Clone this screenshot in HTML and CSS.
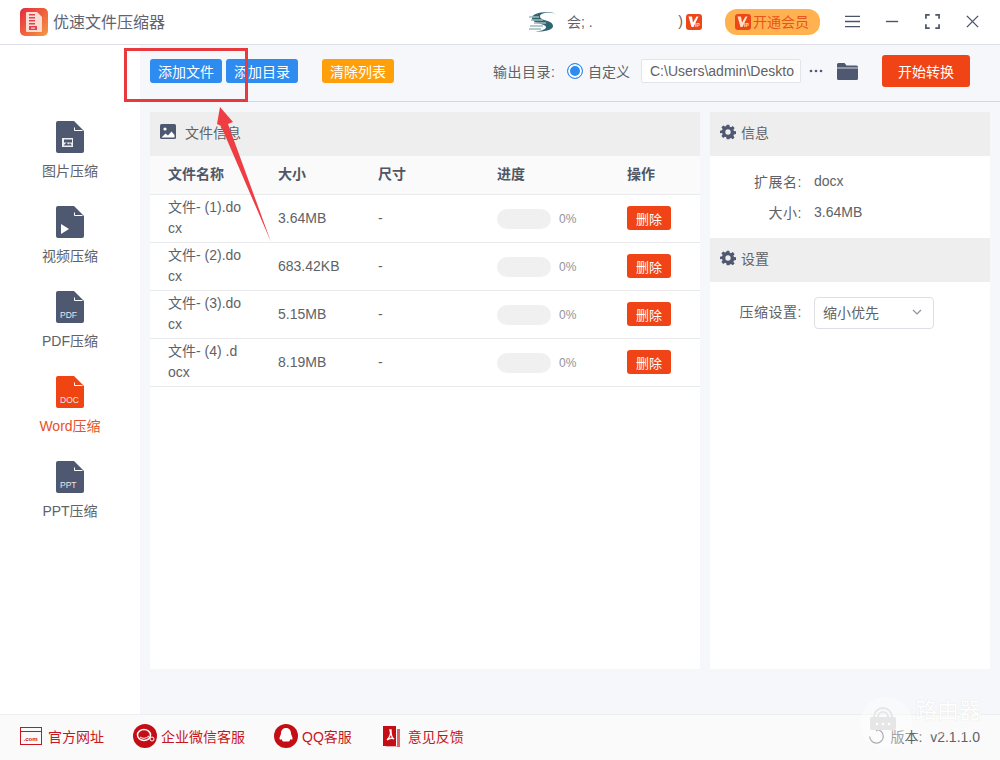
FILE: index.html
```html
<!DOCTYPE html>
<html lang="zh-CN">
<head>
  <meta charset="UTF-8">
  <title>优速文件压缩器</title>
  <link rel="stylesheet" href="styles.css">
</head>
<body>
  <div class="app">
    <!-- Title bar -->
    <header class="titlebar">
      <svg class="logo" viewBox="0 0 28 28">
        <defs>
          <linearGradient id="logoGrad" x1="0" y1="0" x2="1" y2="1">
            <stop offset="0" stop-color="#e5283f"/>
            <stop offset="1" stop-color="#f79a3c"/>
          </linearGradient>
        </defs>
        <rect width="28" height="28" rx="5" fill="url(#logoGrad)"/>
        <path d="M7 4h10l5 5v14a1 1 0 0 1-1 1H7a1 1 0 0 1-1-1V5a1 1 0 0 1 1-1z" fill="#fbdcd4"/>
        <path d="M9 6h6v1.500H9zM9 9h6v1.500H9zM9 12h6v1.500H9zM9 15h6v1.500H9zM9 18h8v4H9z" fill="#e0444a"/>
        <rect x="11" y="19.500" width="4" height="1.200" fill="#fbdcd4"/>
      </svg>
      <span class="app-name">优速文件压缩器</span>
      <div class="user">
        <svg class="user-logo" viewBox="0 0 28 20">
          <path d="M27 1.500C19 0 11 .5 11 4.500c0 4.500 13 3.500 13 9.500 0 4.500-10 6-18 5.500 5-.5 11-1.500 11-4.500 0-3.500-14-3-14-9C3 .5 18-1 27 1.500z" fill="#2f6470"/>
          <path d="M0 5h10M2 8h12M5 11h12M1 14h13M0 17h12" stroke="#9fb9bd" stroke-width="1.300"/>
        </svg>
        <span class="user-name">会; .</span>
        <span class="user-cut">)</span>
        <svg class="vip" viewBox="0 0 16 16">
          <rect width="16" height="16" rx="3" fill="#ee4618"/>
          <path d="M2.500 2.500h3.500l1 6 3.500-6h2L7.500 13H5.500z" fill="#fff"/>
          <text x="9" y="13">IP</text>
        </svg>
      </div>
      <div class="open-vip">
        <svg class="vip" viewBox="0 0 16 16">
          <rect width="16" height="16" rx="3" fill="#ee4618"/>
          <path d="M2.500 2.500h3.500l1 6 3.500-6h2L7.500 13H5.500z" fill="#ffe3c4"/>
          <text x="9" y="13">IP</text>
        </svg>
        <span>开通会员</span>
      </div>
      <div class="win-btns">
        <svg viewBox="0 0 16 16"><path d="M0 2.500h16M0 8h16M0 13.500h16" stroke="#4b5468" stroke-width="1.500" fill="none"/></svg>
        <svg viewBox="0 0 16 16"><path d="M1 8h13" stroke="#4b5468" stroke-width="1.500" fill="none"/></svg>
        <svg viewBox="0 0 16 16"><path d="M1 5V1h4M11 1h4v4M15 11v4h-4M5 15H1v-4" stroke="#4b5468" stroke-width="1.800" fill="none"/></svg>
        <svg viewBox="0 0 16 16"><path d="M2 2l12 12M14 2L2 14" stroke="#4b5468" stroke-width="1.500" fill="none"/></svg>
      </div>
    </header>

    <div class="middle">
      <!-- Left nav -->
      <nav class="sidebar">
        <a class="nav-item">
          <svg class="file-icon" viewBox="0 0 28 32">
            <path class="sheet" d="M2 0h16l10 10v20a2 2 0 0 1-2 2H2a2 2 0 0 1-2-2V2a2 2 0 0 1 2-2z"/>
            <path d="M18.500 6.500v3h8" stroke="#fff" fill="none"/>
            <rect x="6" y="17" width="11" height="9" fill="#eef0f3"/>
            <path d="M7.500 24.500l3-3 2 2 1.500-1.500 2 2.500zM8 18.500h8v3H8z" fill="#4f5871"/>
          </svg>
          <span>图片压缩</span>
        </a>
        <a class="nav-item">
          <svg class="file-icon" viewBox="0 0 28 32">
            <path class="sheet" d="M2 0h16l10 10v20a2 2 0 0 1-2 2H2a2 2 0 0 1-2-2V2a2 2 0 0 1 2-2z"/>
            <path d="M18.500 6.500v3h8" stroke="#fff" fill="none"/>
            <path d="M5 18l8 5-8 5z" fill="#fff"/>
          </svg>
          <span>视频压缩</span>
        </a>
        <a class="nav-item">
          <svg class="file-icon" viewBox="0 0 28 32">
            <path class="sheet" d="M2 0h16l10 10v20a2 2 0 0 1-2 2H2a2 2 0 0 1-2-2V2a2 2 0 0 1 2-2z"/>
            <path d="M18.500 6.500v3h8" stroke="#fff" fill="none"/>
            <text x="4" y="27">PDF</text>
          </svg>
          <span>PDF压缩</span>
        </a>
        <a class="nav-item active">
          <svg class="file-icon" viewBox="0 0 28 32">
            <path class="sheet" d="M2 0h16l10 10v20a2 2 0 0 1-2 2H2a2 2 0 0 1-2-2V2a2 2 0 0 1 2-2z"/>
            <path d="M18.500 6.500v3h8" stroke="#fff" fill="none"/>
            <text x="4" y="27">DOC</text>
          </svg>
          <span>Word压缩</span>
        </a>
        <a class="nav-item">
          <svg class="file-icon" viewBox="0 0 28 32">
            <path class="sheet" d="M2 0h16l10 10v20a2 2 0 0 1-2 2H2a2 2 0 0 1-2-2V2a2 2 0 0 1 2-2z"/>
            <path d="M18.500 6.500v3h8" stroke="#fff" fill="none"/>
            <text x="4" y="27">PPT</text>
          </svg>
          <span>PPT压缩</span>
        </a>
      </nav>

      <div class="content">
        <!-- Toolbar -->
        <div class="toolbar">
          <button class="btn btn-blue">添加文件</button>
          <button class="btn btn-blue">添加目录</button>
          <button class="btn btn-orange">清除列表</button>
          <div class="output">
            <span class="output-label">输出目录:</span>
            <span class="radio"></span>
            <span class="radio-text">自定义</span>
            <div class="path">C:\Users\admin\Deskto</div>
            <svg class="dots" viewBox="0 0 14 4">
              <circle cx="2" cy="2" r="1.300" fill="#4f5871"/>
              <circle cx="7" cy="2" r="1.300" fill="#4f5871"/>
              <circle cx="12" cy="2" r="1.300" fill="#4f5871"/>
            </svg>
            <svg class="folder" viewBox="0 0 21 17">
              <path d="M1.500 0h6l2 2.500h10a1.500 1.500 0 0 1 1.500 1.500v11.500a1.500 1.500 0 0 1-1.500 1.500h-18A1.500 1.500 0 0 1 0 15.500v-14A1.500 1.500 0 0 1 1.500 0z" fill="#4f5871"/>
              <path d="M0 5h21" stroke="#f5f7fa" stroke-width="0.8"/>
            </svg>
            <button class="btn-start">开始转换</button>
          </div>
        </div>

        <div class="panels">
          <!-- File list -->
          <section class="panel-files">
            <div class="panel-head">
              <svg class="head-icon" viewBox="0 0 16 16">
                <rect width="16" height="15" rx="1.500" fill="#4f5871"/>
                <circle cx="5" cy="5" r="1.600" fill="#fff"/>
                <path d="M1.500 13.500l4-4 2.500 2 3.500-4 3 3.500v2.500z" fill="#fff"/>
              </svg>
              <span>文件信息</span>
            </div>
            <div class="file-row file-row-head">
              <div>文件名称</div>
              <div>大小</div>
              <div>尺寸</div>
              <div>进度</div>
              <div>操作</div>
            </div>
            <div class="file-row">
              <div class="file-name">文件- (1).docx</div>
              <div>3.64MB</div>
              <div>-</div>
              <div class="progress"><span class="bar"></span><span class="pct">0%</span></div>
              <div><button class="btn-del">删除</button></div>
            </div>
            <div class="file-row">
              <div class="file-name">文件- (2).docx</div>
              <div>683.42KB</div>
              <div>-</div>
              <div class="progress"><span class="bar"></span><span class="pct">0%</span></div>
              <div><button class="btn-del">删除</button></div>
            </div>
            <div class="file-row">
              <div class="file-name">文件- (3).docx</div>
              <div>5.15MB</div>
              <div>-</div>
              <div class="progress"><span class="bar"></span><span class="pct">0%</span></div>
              <div><button class="btn-del">删除</button></div>
            </div>
            <div class="file-row">
              <div class="file-name">文件- (4) .docx</div>
              <div>8.19MB</div>
              <div>-</div>
              <div class="progress"><span class="bar"></span><span class="pct">0%</span></div>
              <div><button class="btn-del">删除</button></div>
            </div>
          </section>

          <!-- Info and settings -->
          <section class="panel-info">
            <div class="panel-head">
              <svg class="head-icon" viewBox="0 0 24 24"><path fill="#4f5871" fill-rule="evenodd" d="M10 1h4l.6 3.100 1.900.8 2.600-1.800 2.800 2.800-1.800 2.600.8 1.900 3.100.6v4l-3.100.6-.8 1.900 1.800 2.600-2.800 2.800-2.600-1.800-1.900.8L14 23h-4l-.6-3.100-1.900-.8-2.600 1.800-2.800-2.800 1.800-2.600-.8-1.900L0 14v-4l3.100-.6.8-1.900L2.100 4.900l2.800-2.800 2.600 1.800 1.900-.8zM12 8a4 4 0 1 0 0 8 4 4 0 0 0 0-8z"/></svg>
              <span>信息</span>
            </div>
            <div class="info-body">
              <div class="info-row"><label>扩展名:</label><span>docx</span></div>
              <div class="info-row"><label>大小:</label><span>3.64MB</span></div>
            </div>
            <div class="panel-head">
              <svg class="head-icon" viewBox="0 0 24 24"><path fill="#4f5871" fill-rule="evenodd" d="M10 1h4l.6 3.100 1.900.8 2.600-1.800 2.800 2.800-1.800 2.600.8 1.900 3.100.6v4l-3.100.6-.8 1.900 1.800 2.600-2.800 2.800-2.600-1.800-1.900.8L14 23h-4l-.6-3.100-1.900-.8-2.600 1.800-2.800-2.800 1.800-2.600-.8-1.900L0 14v-4l3.100-.6.8-1.900L2.100 4.900l2.800-2.800 2.600 1.800 1.900-.8zM12 8a4 4 0 1 0 0 8 4 4 0 0 0 0-8z"/></svg>
              <span>设置</span>
            </div>
            <div class="setting-row">
              <label>压缩设置:</label>
              <div class="select">
                <span>缩小优先</span>
                <svg viewBox="0 0 10 6"><path d="M1 1l4 4 4-4" stroke="#8d929c" stroke-width="1.200" fill="none"/></svg>
              </div>
            </div>
          </section>
        </div>
      </div>
    </div>

    <!-- Footer -->
    <footer class="footer">
      <a class="foot-link link-site">
        <svg viewBox="0 0 22 18">
          <rect x="0.500" y="0.500" width="21" height="17" fill="none" stroke="#c8161d"/>
          <path d="M0 4.500h22" stroke="#c8161d"/>
          <text x="3.500" y="14">.com</text>
        </svg>
        <span>官方网址</span>
      </a>
      <a class="foot-link link-wechat">
        <svg viewBox="0 0 24 24">
          <circle cx="12" cy="12" r="12" fill="#c40d14"/>
          <ellipse cx="11" cy="11" rx="6.500" ry="5.500" fill="none" stroke="#fff" stroke-width="1.500"/>
          <path d="M7 13q4 3 9-1" fill="none" stroke="#fff"/>
          <circle cx="19" cy="15" r="2" fill="none" stroke="#fff"/>
        </svg>
        <span>企业微信客服</span>
      </a>
      <a class="foot-link link-qq">
        <svg viewBox="0 0 24 24">
          <circle cx="12" cy="12" r="12" fill="#c40d14"/>
          <path d="M12 4c3.500 0 5 2.500 5 5.500 0 1 1.500 3 1.500 5 0 1.500-1 1.500-2 .5-.3 1-1 2-1.500 2.500H9c-.5-.5-1.200-1.500-1.500-2.500-1 1-2 1-2-.5 0-2 1.500-4 1.500-5C7 6.500 8.500 4 12 4z" fill="#fff"/>
        </svg>
        <span>QQ客服</span>
      </a>
      <a class="foot-link link-feedback">
        <svg viewBox="0 0 17 22">
          <path d="M0 1h13v20H0z" fill="#c40d14"/>
          <path d="M14 4h3v18H3v-0.500h11z" fill="#d9676b"/>
          <path d="M7 5c1 3 1 6-3 10 3-2 6-2 7-1-2-1-3-5-3-9z" fill="none" stroke="#fff" stroke-width="1.300"/>
        </svg>
        <span>意见反馈</span>
      </a>
      <div class="version">
        <svg viewBox="0 0 16 16"><path d="M8.500 1.500a6.800 6.800 0 1 1-6.800 7" fill="none" stroke="#74787f" stroke-width="1.200"/><path d="M8 0l3 1.800L8 3.600z" fill="#74787f"/></svg>
        <span>版本:&nbsp; v2.1.1.0</span>
      </div>
    </footer>

    <!-- Things drawn over the screenshot -->
    <div class="mark-box"></div>
    <svg class="mark-arrow" viewBox="0 0 1000 760">
      <polygon points="220,107 233,122 228,124 271,242 221,126 217,124" fill="#ee3e44"/>
    </svg>
    <div class="watermark">
      <svg viewBox="0 0 52 52">
        <circle cx="26" cy="26" r="26" fill="#fff" fill-opacity="0.4"/>
        <path d="M14 20a9 9 0 0 1 18 0M18 20a5 5 0 0 1 10 0" fill="none" stroke="#e6e6e6" stroke-width="2"/>
        <rect x="10" y="20" width="26" height="13" rx="2" fill="#e6e6e6"/>
        <circle cx="17" cy="27" r="1.300" fill="#fff"/><circle cx="23" cy="27" r="1.300" fill="#fff"/><circle cx="29" cy="27" r="1.300" fill="#fff"/>
      </svg>
      <div class="wm-text">
        <div class="wm-cn">路由器</div>
        <div class="wm-en">luyouqi.com</div>
      </div>
    </div>
  </div>
</body>
</html>
```

FILE: styles.css
```css
* {
  margin: 0;
  padding: 0;
  box-sizing: border-box;
}

body {
  font-family: "Liberation Sans", "Noto Sans CJK SC", sans-serif;
  font-size: 14px;
  color: #606266;
  background-color: #fff;
  overflow: hidden;
}

.app {
  position: relative;
  display: flex;
  flex-direction: column;
  width: 1000px;
  height: 760px;
}

/* title bar */
.titlebar {
  display: flex;
  align-items: center;
  height: 45px;
  padding-left: 20px;
  border-bottom: 1px solid #dcdfe6;
  flex-shrink: 0;
}

.logo {
  width: 28px;
  height: 28px;
}

.app-name {
  margin-left: 5px;
  margin-bottom: 2px;
  font-size: 16px;
  color: #5f6470;
}

.user {
  display: flex;
  align-items: center;
  margin-left: 364px;
  width: 173px;
  color: #606266;
}

.user-logo {
  width: 28px;
  height: 20px;
}

.user-name {
  margin-left: 10px;
  margin-bottom: 3px;
  white-space: nowrap;
}

.user-cut {
  margin-left: auto;
  margin-right: 3px;
  margin-bottom: 2px;
}

.vip {
  width: 16px;
  height: 16px;
  flex-shrink: 0;
}

.vip text {
  font-size: 5px;
  font-weight: bold;
  fill: #ffe3c4;
}

.open-vip {
  display: flex;
  align-items: center;
  gap: 2px;
  width: 95px;
  height: 26px;
  margin-left: 23px;
  padding-left: 10px;
  background-color: #ffb24f;
  border-radius: 12px;
  color: #e8541e;
}

.open-vip span {
  margin-bottom: 2px;
}

.win-btns {
  display: flex;
  align-items: center;
  gap: 25px;
  margin-left: 25px;
  margin-bottom: 2px;
}

.win-btns svg {
  width: 15px;
  height: 15px;
}

/* middle */
.middle {
  display: flex;
  flex: 1;
  min-height: 0;
}

.sidebar {
  width: 140px;
  padding-top: 76px;
  flex-shrink: 0;
  background-color: #fff;
}

.nav-item {
  display: flex;
  flex-direction: column;
  align-items: center;
  height: 85px;
  color: #606266;
}

.nav-item span {
  margin-top: 8px;
  line-height: 20px;
}

.file-icon {
  width: 28px;
  height: 32px;
}

.file-icon .sheet {
  fill: #4f5871;
}

.file-icon text {
  font-size: 8.500px;
  fill: #e6e8ee;
}

.nav-item.active {
  color: #e8502a;
}

.nav-item.active .sheet {
  fill: #f04412;
}

.content {
  display: flex;
  flex-direction: column;
  flex: 1;
  min-width: 0;
  background-color: #f5f7fa;
}

/* toolbar */
.toolbar {
  display: flex;
  align-items: center;
  height: 57px;
  padding-left: 10px;
  padding-bottom: 4px;
  border-bottom: 1px solid #d5d8dd;
  flex-shrink: 0;
}

.btn {
  width: 72px;
  height: 24px;
  border: none;
  border-radius: 3px;
  color: #fff;
  font-family: inherit;
  font-size: 14px;
}

.btn-blue {
  background-color: #2e8cf0;
  margin-right: 4px;
}

.btn-orange {
  background-color: #ff9f0a;
  margin-left: 20px;
}

.output {
  display: flex;
  align-items: center;
  margin-left: 99px;
}

.output-label {
  width: 63px;
  letter-spacing: 0.5px;
}

.radio {
  width: 16px;
  height: 16px;
  margin-left: 11px;
  border: 1px solid #2e8cf0;
  border-radius: 50%;
  background-color: #2e8cf0;
  box-shadow: inset 0 0 0 2px #fff;
}

.radio-text {
  margin-left: 5px;
}

.path {
  width: 160px;
  height: 24px;
  margin-left: 11px;
  padding-left: 8px;
  background-color: #fff;
  border: 1px solid #e1e4ea;
  border-radius: 2px;
  line-height: 22px;
  white-space: nowrap;
  overflow: hidden;
}

.dots {
  margin-left: 8px;
  width: 14px;
  height: 4px;
}

.folder {
  width: 21px;
  height: 17px;
  margin-left: 14px;
}

.btn-start {
  width: 88px;
  height: 32px;
  margin-left: 24px;
  border: none;
  border-radius: 3px;
  background-color: #f04416;
  color: #fff;
  font-family: inherit;
  font-size: 14px;
}

/* panels */
.panels {
  display: flex;
  gap: 10px;
  height: 557px;
  margin: 10px 10px 0;
}

.panel-files {
  width: 550px;
  background-color: #fff;
}

.panel-info {
  width: 280px;
  background-color: #fff;
}

.panel-head {
  display: flex;
  align-items: center;
  gap: 9px;
  height: 44px;
  padding-left: 10px;
  padding-bottom: 5px;
  background-color: #eeeeee;
  color: #606266;
}

.panel-info .panel-head {
  gap: 5px;
}

.head-icon {
  width: 16px;
  height: 16px;
}

.file-row {
  display: grid;
  grid-template-columns: 110px 100px 119px 130px 91px;
  align-items: center;
  height: 48px;
  padding-bottom: 1px;
  border-bottom: 1px solid #e8eaed;
}

.file-row > div {
  padding-left: 18px;
}

.file-row-head {
  height: 39px;
  padding-bottom: 4px;
  background-color: #fafafa;
  font-weight: bold;
  color: #4f5665;
}

.file-row .file-name {
  padding-right: 16px;
  line-height: 21px;
  word-break: break-all;
}

.progress {
  display: flex;
  align-items: center;
}

.bar {
  width: 54px;
  height: 20px;
  margin-top: 2px;
  border-radius: 10px;
  background-color: #f0f0f0;
}

.pct {
  margin-left: 8px;
  margin-top: 2px;
  font-size: 12px;
  color: #909399;
}

.btn-del {
  display: block;
  width: 44px;
  height: 24px;
  border: none;
  border-radius: 3px;
  background-color: #f04416;
  color: #fff;
  font-family: inherit;
  font-size: 13px;
}

.info-body {
  height: 82px;
  padding-top: 9px;
}

.info-row {
  display: flex;
  align-items: center;
  height: 31px;
}

.info-row label,
.setting-row label {
  width: 92px;
  text-align: right;
  letter-spacing: 0.5px;
}

.info-row span {
  margin-left: 12px;
}

.setting-row {
  display: flex;
  align-items: center;
  padding-top: 15px;
}

.setting-row label {
  padding-bottom: 5px;
}

.select {
  display: flex;
  align-items: center;
  justify-content: space-between;
  width: 120px;
  height: 32px;
  margin-left: 12px;
  padding: 0 11px 2px 8px;
  border: 1px solid #dcdfe6;
  border-radius: 4px;
}

.select svg {
  width: 10px;
  height: 6px;
}

/* footer */
.footer {
  display: flex;
  align-items: center;
  height: 46px;
  padding-left: 20px;
  padding-bottom: 4px;
  background-color: #fafafa;
  border-top: 1px solid #eceef1;
  flex-shrink: 0;
  color: #c8161d;
}

.foot-link {
  display: flex;
  align-items: center;
  gap: 6px;
}

.foot-link svg {
  width: 24px;
  height: 24px;
}

.foot-link text {
  font-size: 6px;
  font-weight: bold;
  fill: #c8161d;
}

.link-site svg {
  width: 22px;
  height: 18px;
}

.link-wechat {
  margin-left: 29px;
  gap: 4px;
}

.link-qq {
  margin-left: 29px;
  gap: 4px;
}

.link-feedback {
  margin-left: 31px;
  gap: 8px;
}

.link-feedback svg {
  width: 17px;
  height: 22px;
}

.version {
  display: flex;
  align-items: center;
  gap: 7px;
  margin-left: auto;
  margin-right: 20px;
  color: #606266;
}

.version svg {
  width: 16px;
  height: 16px;
}

/* overlays */
.mark-box {
  position: absolute;
  left: 124px;
  top: 48px;
  width: 124px;
  height: 54px;
  border: 3px solid #e8393f;
}

.mark-arrow {
  position: absolute;
  left: 0;
  top: 0;
  width: 1000px;
  height: 760px;
  pointer-events: none;
}

.watermark {
  position: absolute;
  left: 860px;
  top: 697px;
  display: flex;
  gap: 3px;
  color: #fff;
}

.watermark svg {
  width: 52px;
  height: 52px;
}

.wm-cn {
  font-size: 22px;
  line-height: 28px;
  text-shadow: 0 0 1px #d8d8d8;
}

.wm-en {
  font-size: 11px;
  opacity: 0.5;
}
```
